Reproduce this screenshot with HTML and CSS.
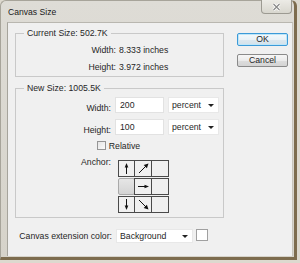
FILE: index.html
```html
<!DOCTYPE html>
<html>
<head>
<meta charset="utf-8">
<link rel="stylesheet" href="styles.css">
</head>
<body>
<div class="window">
  <div class="titlebar">
    <span class="title">Canvas Size</span>
    <div class="close">
      <svg width="9" height="8" viewBox="0 0 9 8"><path d="M1.5 1 L7.5 7 M7.5 1 L1.5 7" stroke="#ffffff" stroke-width="3"/><path d="M1.5 1 L7.5 7 M7.5 1 L1.5 7" stroke="#8a8a8a" stroke-width="1.3"/></svg>
    </div>
  </div>
  <div class="panel">
    <div class="main">
      <div class="groups">
        <fieldset class="group group-current">
          <legend>Current Size: 502.7K</legend>
          <div class="info">
            <span class="lbl">Width:</span><span class="val">8.333 inches</span>
            <span class="lbl">Height:</span><span class="val">3.972 inches</span>
          </div>
        </fieldset>
        <fieldset class="group group-new">
          <legend>New Size: 1005.5K</legend>
          <div class="form">
            <span class="lbl">Width:</span>
            <div class="fields"><div class="input">200</div><div class="select unit"><span>percent</span><i class="caret"></i></div></div>
            <span class="lbl">Height:</span>
            <div class="fields"><div class="input">100</div><div class="select unit"><span>percent</span><i class="caret"></i></div></div>
            <div class="relative"><span class="check"></span><span>Relative</span></div>
            <span class="lbl anchor-lbl">Anchor:</span>
            <div class="anchor">
              <div class="cell"><svg width="15" height="15" viewBox="0 0 15 15"><path d="M7.5 13 V4" stroke="#111" stroke-width="1"/><path d="M7.5 2 L9.3 6.5 L5.7 6.5 Z" fill="#111"/></svg></div>
              <div class="cell"><svg width="15" height="15" viewBox="0 0 15 15"><path d="M3 12 L10 5" stroke="#111" stroke-width="1"/><path d="M12.5 2.5 L10.9 7.3 L7.7 4.1 Z" fill="#111"/></svg></div>
              <div class="cell"></div>
              <div class="cell sel"></div>
              <div class="cell"><svg width="15" height="15" viewBox="0 0 15 15"><path d="M2 7.5 H10" stroke="#111" stroke-width="1"/><path d="M13 7.5 L8.5 9.3 L8.5 5.7 Z" fill="#111"/></svg></div>
              <div class="cell"></div>
              <div class="cell"><svg width="15" height="15" viewBox="0 0 15 15"><path d="M7.5 2 V11" stroke="#111" stroke-width="1"/><path d="M7.5 13 L9.3 8.5 L5.7 8.5 Z" fill="#111"/></svg></div>
              <div class="cell"><svg width="15" height="15" viewBox="0 0 15 15"><path d="M3 3 L10 10" stroke="#111" stroke-width="1"/><path d="M12.5 12.5 L7.7 10.9 L10.9 7.7 Z" fill="#111"/></svg></div>
              <div class="cell"></div>
            </div>
          </div>
        </fieldset>
      </div>
      <div class="buttons">
        <div class="btn default">OK</div>
        <div class="btn">Cancel</div>
      </div>
    </div>
    <div class="footer">
      <span class="lbl">Canvas extension color:</span>
      <div class="fields"><div class="select ext"><span>Background</span><i class="caret"></i></div><span class="swatch"></span></div>
    </div>
  </div>
</div>
</body>
</html>
```
FILE: styles.css
```css
html, body {
  margin: 0;
  padding: 0;
}
body {
  width: 300px;
  height: 263px;
  background: #ddd9cf;
  font-family: "Liberation Sans", Arial, sans-serif;
  font-size: 8.7px;
  color: #262626;
  overflow: hidden;
}
.window {
  box-sizing: border-box;
  width: 297px;
  height: 260px;
  display: flex;
  flex-direction: column;
  background: linear-gradient(#dedcd6, #d6d3ca);
  border: 1px solid #a7a49a;
  border-right: 3px solid #7d6c4e;
  border-bottom: 3px solid #7d6c4e;
  border-radius: 6px 6px 0 0;
  padding: 0 1px 1px 6px;
}
.titlebar {
  height: 21px;
  display: flex;
  justify-content: space-between;
  align-items: flex-start;
}
.title {
  font-size: 8.6px;
  line-height: 11px;
  margin-top: 6px;
  padding-left: 1px;
  color: #1a1a1a;
}
.close {
  box-sizing: border-box;
  width: 31px;
  height: 14px;
  margin-top: -1px;
  margin-right: 1px;
  border: 1px solid #9c9a92;
  border-top: none;
  border-radius: 0 0 4px 4px;
  background: linear-gradient(#ecebe6, #d8d6ce);
  display: flex;
  align-items: center;
  justify-content: center;
}
.panel {
  flex: 1;
  background: #f0f0f0;
  border-left: 1px solid #a6a49c;
  border-top: 1px solid #b9b7b0;
  border-right: 1px solid #c8c5bc;
  display: flex;
  flex-direction: column;
}
.main {
  display: flex;
  padding-top: 5px;
}
.groups {
  padding-left: 7px;
  display: flex;
  flex-direction: column;
  gap: 6px;
}
.group {
  box-sizing: border-box;
  width: 209px;
  margin: 0;
  padding: 0;
  min-width: 0;
  border: 1px solid #c9c9c9;
}
.group legend {
  margin-left: 8px;
  padding: 0 3px;
  line-height: 11px;
}
.group-current {
  height: 49px;
}
.info {
  display: grid;
  grid-template-columns: 100px auto;
  column-gap: 3px;
  grid-auto-rows: 17px;
  align-items: center;
  padding-top: 2px;
}
.lbl {
  text-align: right;
  white-space: nowrap;
}
.group-new {
  height: 135px;
}
.form {
  display: grid;
  grid-template-columns: 95px auto;
  column-gap: 4px;
  align-items: center;
  padding-top: 3px;
}
.fields {
  display: flex;
  gap: 4px;
  align-items: flex-start;
}
.form .fields {
  height: 16px;
  margin-bottom: 6px;
}
.input {
  box-sizing: border-box;
  width: 49px;
  height: 16px;
  background: #fff;
  border: 1px solid #e2e2e2;
  padding-left: 4px;
  line-height: 14px;
}
.select {
  box-sizing: border-box;
  height: 16px;
  background: #fff;
  border: 1px solid #e8e8e8;
  padding: 0 4px 0 3px;
  display: flex;
  align-items: center;
  justify-content: space-between;
}
.unit {
  width: 51px;
}
.caret {
  width: 0;
  height: 0;
  border-left: 3px solid transparent;
  border-right: 3px solid transparent;
  border-top: 3px solid #222;
}
.relative {
  grid-column: 1 / 3;
  display: flex;
  justify-content: center;
  align-items: center;
  gap: 3px;
  margin-top: -1px;
  height: 11px;
  padding-right: 2px;
}
.check {
  box-sizing: border-box;
  width: 9px;
  height: 9px;
  border: 1px solid #959595;
  background: linear-gradient(135deg, #e4e4e4, #fbfbfb);
}
.anchor-lbl {
  align-self: start;
  margin-top: 6px;
  line-height: 11px;
}
.anchor {
  margin-top: 9px;
  margin-left: 3px;
  display: grid;
  grid-template-columns: repeat(3, 17px);
  grid-auto-rows: 17px;
  row-gap: 1px;
  width: 51px;
}
.cell {
  box-sizing: border-box;
  border: 1px solid #4a4a4a;
  margin-left: -1px;
  display: flex;
  align-items: center;
  justify-content: center;
  background: #f0f0f0;
}
.cell:nth-child(3n+1) {
  margin-left: 0;
}
.cell.sel {
  border: 1px solid #a9a9a9;
  border-radius: 2px;
  background: linear-gradient(#e6e6e6, #d4d4d4);
}
.buttons {
  margin-left: 13px;
  margin-top: 5px;
  display: flex;
  flex-direction: column;
  gap: 8px;
}
.btn {
  box-sizing: border-box;
  width: 51px;
  height: 13px;
  border: 1px solid #8a8a8a;
  border-radius: 2px;
  background: linear-gradient(#f6f6f6 0%, #ebebeb 50%, #dddddd 51%, #d4d4d4 100%);
  text-align: center;
  line-height: 11px;
}
.btn.default {
  border-color: #3c9ad8;
  box-shadow: inset 0 0 0 1px #bfe6f8;
  background: linear-gradient(#f4f9fc 0%, #eaf2f7 50%, #dde8ef 51%, #d3e1ea 100%);
}
.footer {
  display: grid;
  grid-template-columns: 104px auto;
  column-gap: 4px;
  align-items: center;
  margin-top: 11px;
}
.ext {
  width: 77px;
  height: 14px;
}
.swatch {
  box-sizing: border-box;
  width: 12px;
  height: 12px;
  background: #fff;
  border: 1px solid #a0a0a0;
  margin-left: -1px;
}
```
